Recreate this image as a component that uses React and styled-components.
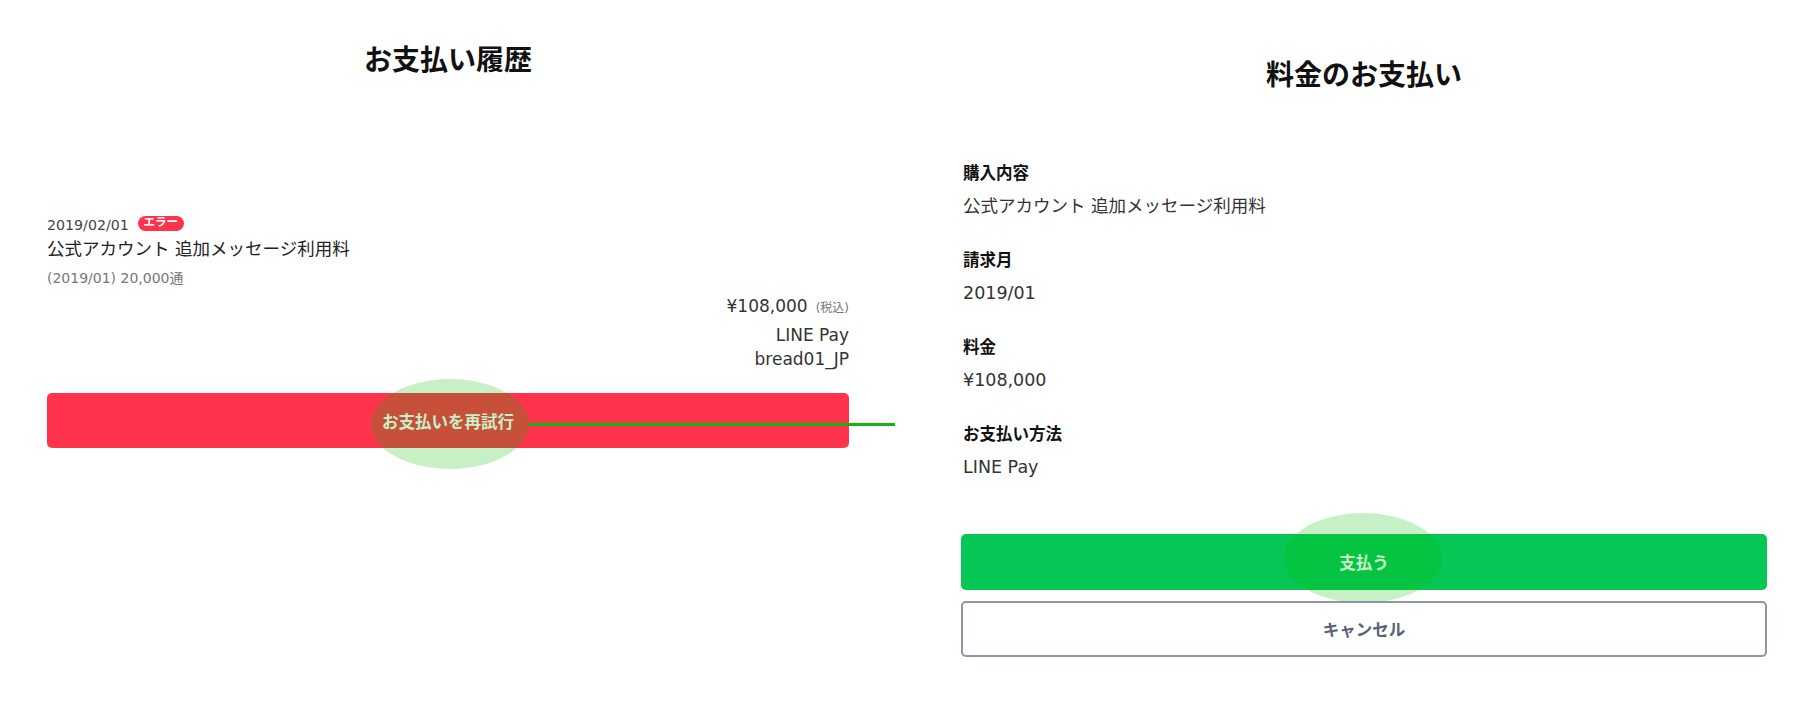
import styled, { createGlobalStyle } from "styled-components";

const GlobalStyle = createGlobalStyle`
  html, body {
    margin: 0;
    padding: 0;
    background: #fff;
  }
  body {
    font-family: "DejaVu Sans", "Noto Sans CJK JP", sans-serif;
    color: #111;
  }
`;

const Page = styled.div`
  display: flex;
  align-items: flex-start;
  width: 1812px;
  height: 711px;
  overflow: hidden;
`;

const LeftPanel = styled.section`
  display: flex;
  flex-direction: column;
  width: 802px;
  margin-left: 47px;
  padding-top: 41px;
`;

const RightPanel = styled.section`
  display: flex;
  flex-direction: column;
  width: 806px;
  margin-left: 112px;
  padding-top: 56px;
`;

const PageTitle = styled.h1`
  margin: 0;
  font-size: 28px;
  line-height: 40px;
  font-weight: 700;
  text-align: center;
  color: #111;
`;

const HistoryItem = styled.div`
  display: flex;
  flex-direction: column;
  margin-top: 134px;
`;

const DateRow = styled.div`
  display: flex;
  align-items: center;
  gap: 9px;
  height: 20px;
  font-size: 14.2px;
  color: #444;
`;

const Badge = styled.span`
  display: inline-flex;
  align-items: center;
  justify-content: center;
  width: 46px;
  height: 15px;
  margin-top: -4px;
  border-radius: 8px;
  background: #ff334b;
  color: #fff;
  font-size: 11.5px;
  font-weight: 700;
  line-height: 1;
`;

const ItemName = styled.div`
  margin-top: 2px;
  font-size: 17.5px;
  line-height: 24px;
  color: #222;
`;

const ItemNote = styled.div`
  margin-top: 7px;
  font-size: 14px;
  line-height: 20px;
  color: #777;
`;

const Amount = styled.div`
  margin-top: 6px;
  text-align: right;
  font-size: 17px;
  line-height: 24px;
  color: #333;
`;

const TaxNote = styled.span`
  margin-left: 8px;
  font-size: 12px;
  color: #777;
`;

const PayInfo = styled.div`
  margin-top: 3px;
  display: flex;
  flex-direction: column;
  align-items: flex-end;
  font-size: 17px;
  line-height: 24px;
  color: #333;
`;

const ButtonWrap = styled.div`
  position: relative;
  margin-top: ${(p) => p.$top || 0}px;
`;

const Button = styled.button`
  display: flex;
  align-items: center;
  justify-content: center;
  width: 100%;
  height: ${(p) => p.$height || 55}px;
  border-radius: 5px;
  font-family: "DejaVu Sans", "Noto Sans CJK JP", sans-serif;
  font-size: 16.5px;
  font-weight: 700;
  cursor: pointer;
  background: ${(p) => p.$bg};
  color: ${(p) => p.$color || "#fff"};
  border: ${(p) => (p.$outline ? "2px solid #8f95a8" : "none")};
`;

const Tap = styled.span`
  position: absolute;
  left: ${(p) => p.$x}px;
  top: ${(p) => p.$y}px;
  width: 158px;
  height: 90px;
  border-radius: 50%;
  background: rgba(0, 185, 0, 0.22);
  pointer-events: none;
`;

const Connector = styled.span`
  position: absolute;
  left: 482px;
  top: 30px;
  width: 366px;
  height: 3px;
  background: #14b414;
  pointer-events: none;
`;

const DetailList = styled.dl`
  display: flex;
  flex-direction: column;
  gap: 31px;
  margin: 66px 0 0;
  padding-left: 2px;
`;

const DetailGroup = styled.div`
  display: flex;
  flex-direction: column;
  gap: 8px;
`;

const DetailLabel = styled.dt`
  font-size: 16.5px;
  line-height: 24px;
  font-weight: 700;
  color: #111;
`;

const DetailValue = styled.dd`
  margin: 0;
  font-size: 17.5px;
  line-height: 24px;
  color: #333;
`;

const details = [
  { label: "購入内容", value: "公式アカウント 追加メッセージ利用料" },
  { label: "請求月", value: "2019/01" },
  { label: "料金", value: "¥108,000" },
  { label: "お支払い方法", value: "LINE Pay" },
];

export default function App() {
  return (
    <>
      <GlobalStyle />
      <Page>
        <LeftPanel>
          <PageTitle>お支払い履歴</PageTitle>
          <HistoryItem>
            <DateRow>
              2019/02/01
              <Badge>エラー</Badge>
            </DateRow>
            <ItemName>公式アカウント 追加メッセージ利用料</ItemName>
            <ItemNote>(2019/01) 20,000通</ItemNote>
            <Amount>
              ¥108,000
              <TaxNote>(税込)</TaxNote>
            </Amount>
            <PayInfo>
              <span>LINE Pay</span>
              <span>bread01_JP</span>
            </PayInfo>
          </HistoryItem>
          <ButtonWrap $top={22}>
            <Button $bg="#ff334b">お支払いを再試行</Button>
            <Tap $x={324} $y={-14} />
            <Connector />
          </ButtonWrap>
        </LeftPanel>

        <RightPanel>
          <PageTitle>料金のお支払い</PageTitle>
          <DetailList>
            {details.map((d) => (
              <DetailGroup key={d.label}>
                <DetailLabel>{d.label}</DetailLabel>
                <DetailValue>{d.value}</DetailValue>
              </DetailGroup>
            ))}
          </DetailList>
          <ButtonWrap $top={55}>
            <Button $bg="#06c755" $height={56}>支払う</Button>
            <Tap $x={323} $y={-21} />
          </ButtonWrap>
          <ButtonWrap $top={11}>
            <Button $bg="#fff" $color="#5a6276" $outline $height={56}>
              キャンセル
            </Button>
          </ButtonWrap>
        </RightPanel>
      </Page>
    </>
  );
}
